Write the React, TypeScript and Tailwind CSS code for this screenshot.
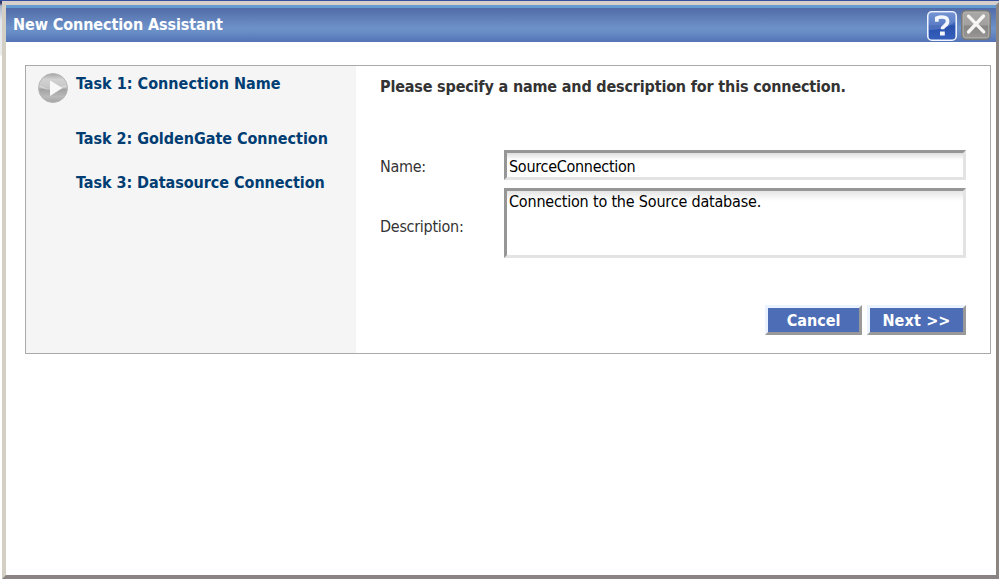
import React from "react";

function HelpIcon() {
  return (
    <svg width="30" height="30" viewBox="0 0 30 30" className="block">
      <defs>
        <linearGradient id="help" x1="0" y1="0" x2="0" y2="1">
          <stop offset="0" stopColor="#5a80cc" />
          <stop offset="0.45" stopColor="#3a63ba" />
          <stop offset="0.5" stopColor="#2850ad" />
          <stop offset="1" stopColor="#3560bb" />
        </linearGradient>
      </defs>
      <rect x="0.8" y="0.8" width="28.4" height="28.4" rx="4" fill="url(#help)" stroke="#eef3fd" strokeWidth="1.6" />
      <path d="M2 2h26v9Q18 19 2 19z" fill="#fff" opacity="0.17" />
      <path d="M9.8 10.7V7.2Q12 6 15 6q5.6 0 5.6 4.2 0 2.5-2.8 4.6-2.3 1.6-2.3 3.4" fill="none" stroke="#f3f6fc" strokeWidth="3.7" />
      <rect x="13" y="20.5" width="4.8" height="4" fill="#f3f6fc" />
    </svg>
  );
}

function CloseIcon() {
  return (
    <svg width="30" height="30" viewBox="0 0 30 30" className="block">
      <defs>
        <linearGradient id="close" x1="0" y1="0" x2="0" y2="1">
          <stop offset="0" stopColor="#aaa9a7" />
          <stop offset="0.48" stopColor="#a2a19f" />
          <stop offset="0.55" stopColor="#878685" />
          <stop offset="1" stopColor="#999896" />
        </linearGradient>
      </defs>
      <rect x="0.8" y="0.8" width="28.4" height="28.4" rx="4" fill="url(#close)" stroke="#777879" strokeWidth="1.6" />
      <rect x="2.2" y="2.2" width="25.6" height="25.6" rx="2.5" fill="none" stroke="#b2b1af" />
      <path d="M7.5 6.2l15.2 15.6M22.5 6L7.5 22" stroke="#f6f6f6" strokeWidth="3.3" strokeLinecap="round" />
    </svg>
  );
}

function PlayIcon() {
  return (
    <svg width="30" height="30" viewBox="0 0 30 30" className="block">
      <defs>
        <linearGradient id="play" x1="0" y1="0" x2="0" y2="1">
          <stop offset="0" stopColor="#a5a5a5" />
          <stop offset="0.2" stopColor="#d2d2d2" />
          <stop offset="0.48" stopColor="#c6c6c6" />
          <stop offset="0.55" stopColor="#a2a2a2" />
          <stop offset="0.8" stopColor="#bababa" />
          <stop offset="1" stopColor="#a4a4a4" />
        </linearGradient>
      </defs>
      <circle cx="15" cy="15" r="14.5" fill="url(#play)" stroke="#b5b5b5" />
      <path d="M1.5 13Q8 17.5 15 16t13.5-3" fill="none" stroke="#e4e4e4" opacity="0.8" />
      <path d="M12 7.5L24.5 15 12 23z" fill="#f8f8f8" />
    </svg>
  );
}

export default function App() {
  return (
    <div className="h-[579px] w-[999px] overflow-hidden border-t border-[#344f9f] bg-[linear-gradient(#33366b_0px,#33366b_2px,#a9b5c8_5px,#e2e7ef_20px,#ececec_54px,#fff_55px)] pl-[2px] font-['DejaVu_Sans_Condensed','DejaVu_Sans',sans-serif] text-[16px] leading-5">
      <main className="h-[578px] w-[998px] border-4 border-t-[#d5cecb] border-r-[#8b8681] border-b-[#8a8583] border-l-[#d3cfc5] bg-white">
        <header className="flex h-[37px] items-start justify-between border-t-[3px] border-[#639bd0] bg-[linear-gradient(#516ba8,#6d91c8_58%,#6a8fc7_68%,#5473b6)] pr-[5px] pl-[7px]">
          <h1 className="mt-[7px] font-bold tracking-[-0.09px] text-white">New Connection Assistant</h1>
          <div className="flex gap-[4px] pt-[1px]">
            <button className="mt-[2px]"><HelpIcon /></button>
            <button><CloseIcon /></button>
          </div>
        </header>
        <section className="mt-[23px] ml-[19px] flex h-[289px] w-[966px] border border-[#a9a9a9]">
          <nav className="flex w-[330px] gap-[8px] bg-[#f5f5f5] pl-[12px] font-bold text-[#003d73]">
            <div className="pt-[7px]"><PlayIcon /></div>
            <ol className="pt-[8px] whitespace-nowrap">
              <li className="mb-[35px] tracking-[0.02px]">Task 1: Connection Name</li>
              <li className="mb-[24px] tracking-[-0.03px]">Task 2: GoldenGate Connection</li>
              <li className="tracking-[-0.04px]">Task 3: Datasource Connection</li>
            </ol>
          </nav>
          <form className="flex w-[610px] flex-col pt-[11px] pl-[24px] text-[#333]">
            <h2 className="font-bold tracking-[-0.17px] whitespace-nowrap">Please specify a name and description for this connection.</h2>
            <div className="mt-[53px] flex items-center">
              <label className="w-[124px] pt-[3px] tracking-[-0.3px]">Name:</label>
              <input readOnly value="SourceConnection" className="h-[30px] w-[462px] border-[3px] border-t-[#969696] border-r-[#e3e3e3] border-b-[#e3e3e3] border-l-[#969696] bg-[linear-gradient(#dedede,#fff_7px)] px-[2px] pt-[2px] tracking-[-0.28px] text-black outline-none" />
            </div>
            <div className="mt-[8px] flex items-center">
              <label className="mt-[7px] w-[124px] tracking-[-0.28px]">Description:</label>
              <textarea readOnly value="Connection to the Source database." className="h-[70px] w-[462px] resize-none border-[3px] border-t-[#969696] border-r-[#e3e3e3] border-b-[#e3e3e3] border-l-[#969696] bg-[linear-gradient(#e5e5e5,#fff_10px)] px-[2px] pt-px tracking-[-0.19px] text-black outline-none" />
            </div>
            <div className="mt-[47px] flex justify-end gap-[5px] font-bold text-white">
              <button type="button" className="h-[30px] w-[97px] border-[3px] border-t-[#eaf3ff] border-r-[#999] border-b-[#999] border-l-[#eaf3ff] bg-[#4d6eb7] pt-[2px]">Cancel</button>
              <button type="button" className="h-[30px] w-[99px] border-[3px] border-t-[#eaf3ff] border-r-[#999] border-b-[#999] border-l-[#eaf3ff] bg-[#4d6eb7] pt-[2px] tracking-[0.15px]">Next &gt;&gt;</button>
            </div>
          </form>
        </section>
      </main>
    </div>
  );
}
